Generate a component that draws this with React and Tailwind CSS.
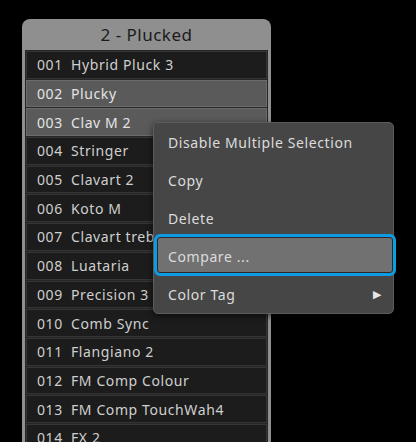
import React from "react";

const presets = [
  { id: "001", name: "Hybrid Pluck 3" },
  { id: "002", name: "Plucky", selected: true },
  { id: "003", name: "Clav M 2", selected: true },
  { id: "004", name: "Stringer" },
  { id: "005", name: "Clavart 2" },
  { id: "006", name: "Koto M" },
  { id: "007", name: "Clavart treble" },
  { id: "008", name: "Luataria" },
  { id: "009", name: "Precision 3" },
  { id: "010", name: "Comb Sync" },
  { id: "011", name: "Flangiano 2" },
  { id: "012", name: "FM Comp Colour" },
  { id: "013", name: "FM Comp TouchWah4" },
  { id: "014", name: "FX 2" },
];

const menuItems = ["Disable Multiple Selection", "Copy", "Delete", "Compare ...", "Color Tag"];

const PresetRow = ({ id, name, selected }) => (
  <div
    className={
      selected
        ? "h-[27.7px] shrink-0 flex items-center border border-[#6c6c6c] bg-[#5a5a5a] text-[#e4e4e4]"
        : "h-[27.7px] shrink-0 flex items-center border border-[#353535] bg-[#1c1c1c] text-[#cfcfcf]"
    }
  >
    <span className="w-[34px] pl-[10px] box-content">{id}</span>
    <span className="whitespace-nowrap overflow-hidden">{name}</span>
  </div>
);

const ContextMenu = () => (
  <div className="absolute left-[153px] top-[122px] w-[241px] rounded-[5px] border border-[#5c5c5c] bg-[#464646] shadow-[0_2px_6px_rgba(0,0,0,0.6)]">
    {menuItems.map((label, i) => (
      <div key={label} className="relative h-[38px] flex items-center">
        {i === 3 && (
          <div className="absolute left-0 right-[-3px] top-[-3px] bottom-[-1px] rounded-[6px] border-[3px] border-[#0f9be3] bg-[#717171] shadow-[inset_0_0_0_1px_#2a2a2a]" />
        )}
        <span className="relative pl-[14px] text-[14px] tracking-[0.6px] text-[#dcdcdc]">{label}</span>
        {i === 4 && (
          <span className="absolute right-[12px] text-[11px] text-[#e6e6e6]">▶</span>
        )}
      </div>
    ))}
  </div>
);

export default function App() {
  return (
    <div
      className="relative w-[416px] h-[442px] overflow-hidden bg-black pl-[22px] pt-[19px]"
      style={{ fontFamily: '"Noto Sans", "Open Sans", sans-serif' }}
    >
      <div className="w-[249px] rounded-t-[8px] bg-[#8f8f8f] px-[3px]">
        <div className="h-[31px] flex items-center justify-center text-[17px] tracking-[0.5px] text-[#1b1b1b]">
          2 - Plucked
        </div>
        <div className="flex flex-col gap-px bg-[#262626] p-px text-[14px] tracking-[0.6px]">
          {presets.map((p) => (
            <PresetRow key={p.id} {...p} />
          ))}
        </div>
      </div>
      <ContextMenu />
    </div>
  );
}
